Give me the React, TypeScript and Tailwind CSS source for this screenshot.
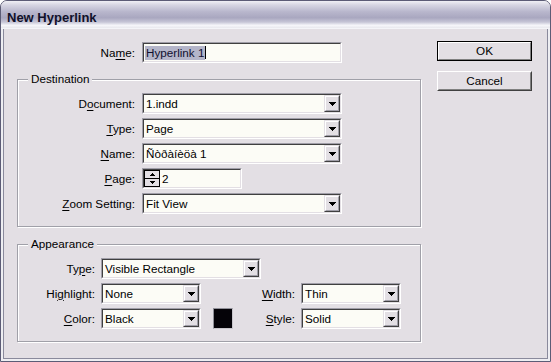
import React from "react";

const FONT = "font-['Liberation_Sans',Arial,sans-serif]";

const U = ({ children }: { children: React.ReactNode }) => (
  <span className="underline decoration-1 underline-offset-[2px]">{children}</span>
);

const TriDown = () => (
  <svg width="7" height="4" viewBox="0 0 7 4" shapeRendering="crispEdges">
    <rect x="0" y="0" width="7" height="1" fill="#000" />
    <rect x="1" y="1" width="5" height="1" fill="#000" />
    <rect x="2" y="2" width="3" height="1" fill="#000" />
    <rect x="3" y="3" width="1" height="1" fill="#000" />
  </svg>
);

const SmallTri = ({ up }: { up?: boolean }) => (
  <svg width="5" height="3" viewBox="0 0 5 3" shapeRendering="crispEdges">
    {up ? (
      <>
        <rect x="2" y="0" width="1" height="1" fill="#000" />
        <rect x="1" y="1" width="3" height="1" fill="#000" />
        <rect x="0" y="2" width="5" height="1" fill="#000" />
      </>
    ) : (
      <>
        <rect x="0" y="0" width="5" height="1" fill="#000" />
        <rect x="1" y="1" width="3" height="1" fill="#000" />
        <rect x="2" y="2" width="1" height="1" fill="#000" />
      </>
    )}
  </svg>
);

function Sunken({ w, children }: { w: string; children: React.ReactNode }) {
  return (
    <div className={`${w} h-[21px] shrink-0 border border-t-[#a09ea8] border-l-[#a09ea8] border-b-white border-r-white`}>
      <div className="h-full border border-t-[#404040] border-l-[#404040] border-b-[#e3dfe4] border-r-[#e3dfe4] bg-[#fcfcf6] flex items-center overflow-hidden">
        {children}
      </div>
    </div>
  );
}

function Dropdown({ value, w }: { value: string; w: string }) {
  return (
    <Sunken w={w}>
      <span className="flex-1 pl-[2px] whitespace-nowrap leading-[17px]">{value}</span>
      <div className="w-[16px] h-full shrink-0 border border-t-[#e3dfe4] border-l-[#e3dfe4] border-b-[#404040] border-r-[#404040]">
        <div className="h-full border border-t-white border-l-white border-b-[#a09ea8] border-r-[#a09ea8] bg-[#e3dfe4] flex items-center justify-center">
          <TriDown />
        </div>
      </div>
    </Sunken>
  );
}

function Group({ title, children }: { title: string; children: React.ReactNode }) {
  return (
    <div className="relative border border-[#a0a0a8] shadow-[inset_1px_1px_0_#ffffff,1px_1px_0_#ffffff] flex flex-col gap-[4px] pt-[13px] pb-[12px]">
      <span className="absolute left-[10px] top-[-8px] bg-[#e3dfe4] px-[3px] leading-[14px]">{title}</span>
      {children}
    </div>
  );
}

function Btn({ label, def }: { label: string; def?: boolean }) {
  if (def) {
    return (
      <div className="w-[95px] h-[20px] border border-black">
        <div className="h-full border border-t-white border-l-white border-b-[#808080] border-r-[#808080] flex items-center justify-center leading-[14px]">
          {label}
        </div>
      </div>
    );
  }
  return (
    <div className="w-[95px] h-[20px] border border-t-white border-l-white border-b-[#404040] border-r-[#404040]">
      <div className="h-full border border-t-[#e3dfe4] border-l-[#e3dfe4] border-b-[#808080] border-r-[#808080] flex items-center justify-center leading-[14px]">
        {label}
      </div>
    </div>
  );
}

export default function App() {
  return (
    <div className={`${FONT} text-[11.7px] text-black w-[551px] h-[362px] border border-[#5c5c76] rounded-t-[7px] overflow-hidden flex flex-col bg-[#e3dfe4]`}>
      {/* Title bar */}
      <div className="h-[27px] shrink-0 pl-[6px] pt-[8px] bg-[linear-gradient(to_bottom,#f0f0f5_0%,#d6d5e2_15%,#b8b6cc_40%,#a9a7c0_62%,#c6c5d6_78%,#f6f6fa_90%,#e8e8ee_100%)]">
        <span className="font-bold text-[13px] leading-[15px] text-[#10102a]">New Hyperlink</span>
      </div>
      <div className="h-[1px] bg-[#f4f4f8] shrink-0" />
      {/* Frame */}
      <div className="flex-1 border-x-2 border-b-2 border-[#eeeef2] flex">
        <div className="flex-1 border-x border-b border-[#8a8a9c] bg-[#e3dfe4] flex items-start pl-[13px] pt-[12px]">
          {/* Left column */}
          <div className="w-[404px] mt-[1px] flex flex-col">
            <div className="flex items-center h-[21px]">
              <span className="w-[118px] text-right">
                Na<U>m</U>e:
              </span>
              <div className="ml-[7px]">
                <Sunken w="w-[200px]">
                  <span className="ml-[1px] px-[1px] bg-[#b4b5c9] text-[#101030] leading-[14px] whitespace-nowrap">Hyperlink 1</span>
                  <span className="w-[1px] h-[13px] bg-black" />
                </Sunken>
              </div>
            </div>

            <div className="mt-[16px]">
              <Group title="Destination">
                <div className="flex items-center">
                  <span className="w-[117px] text-right">
                    D<U>o</U>cument:
                  </span>
                  <div className="ml-[7px]">
                    <Dropdown value="1.indd" w="w-[200px]" />
                  </div>
                </div>
                <div className="flex items-center">
                  <span className="w-[117px] text-right">
                    <U>T</U>ype:
                  </span>
                  <div className="ml-[7px]">
                    <Dropdown value="Page" w="w-[200px]" />
                  </div>
                </div>
                <div className="flex items-center">
                  <span className="w-[117px] text-right">
                    <U>N</U>ame:
                  </span>
                  <div className="ml-[7px]">
                    <Dropdown value="Ñòðàíèöà 1" w="w-[200px]" />
                  </div>
                </div>
                <div className="flex items-center">
                  <span className="w-[117px] text-right">
                    <U>P</U>age:
                  </span>
                  <div className="ml-[7px]">
                    <Sunken w="w-[100px]">
                      <div className="w-[16px] h-full shrink-0 flex flex-col">
                        <div className="h-[9px] border border-black bg-[#e3dfe4] flex items-center justify-center">
                          <SmallTri up />
                        </div>
                        <div className="h-[8px] border border-t-0 border-black bg-[#e3dfe4] flex items-center justify-center">
                          <SmallTri />
                        </div>
                      </div>
                      <span className="pl-[2px] leading-[17px]">2</span>
                    </Sunken>
                  </div>
                </div>
                <div className="flex items-center">
                  <span className="w-[117px] text-right">
                    <U>Z</U>oom Setting:
                  </span>
                  <div className="ml-[7px]">
                    <Dropdown value="Fit View" w="w-[200px]" />
                  </div>
                </div>
              </Group>
            </div>

            <div className="mt-[17px]">
              <Group title="Appearance">
                <div className="flex items-center">
                  <span className="w-[77px] text-right">
                    Ty<U>p</U>e:
                  </span>
                  <div className="ml-[6px]">
                    <Dropdown value="Visible Rectangle" w="w-[160px]" />
                  </div>
                </div>
                <div className="flex items-center">
                  <span className="w-[77px] text-right">
                    Hi<U>g</U>hlight:
                  </span>
                  <div className="ml-[6px]">
                    <Dropdown value="None" w="w-[100px]" />
                  </div>
                  <span className="w-[94px] text-right">
                    <U>W</U>idth:
                  </span>
                  <div className="ml-[6px]">
                    <Dropdown value="Thin" w="w-[100px]" />
                  </div>
                </div>
                <div className="flex items-center">
                  <span className="w-[77px] text-right">
                    <U>C</U>olor:
                  </span>
                  <div className="ml-[6px]">
                    <Dropdown value="Black" w="w-[100px]" />
                  </div>
                  <div className="ml-[12px] w-[20px] h-[21px] border border-t-[#909098] border-l-[#909098] border-b-[#c8c6cc] border-r-[#c8c6cc] bg-[#050308]" />
                  <span className="w-[62px] text-right">
                    <U>S</U>tyle:
                  </span>
                  <div className="ml-[6px]">
                    <Dropdown value="Solid" w="w-[100px]" />
                  </div>
                </div>
              </Group>
            </div>
          </div>

          {/* Right column */}
          <div className="ml-[16px] flex flex-col gap-[10px]">
            <Btn label="OK" def />
            <Btn label="Cancel" />
          </div>
        </div>
      </div>
    </div>
  );
}
